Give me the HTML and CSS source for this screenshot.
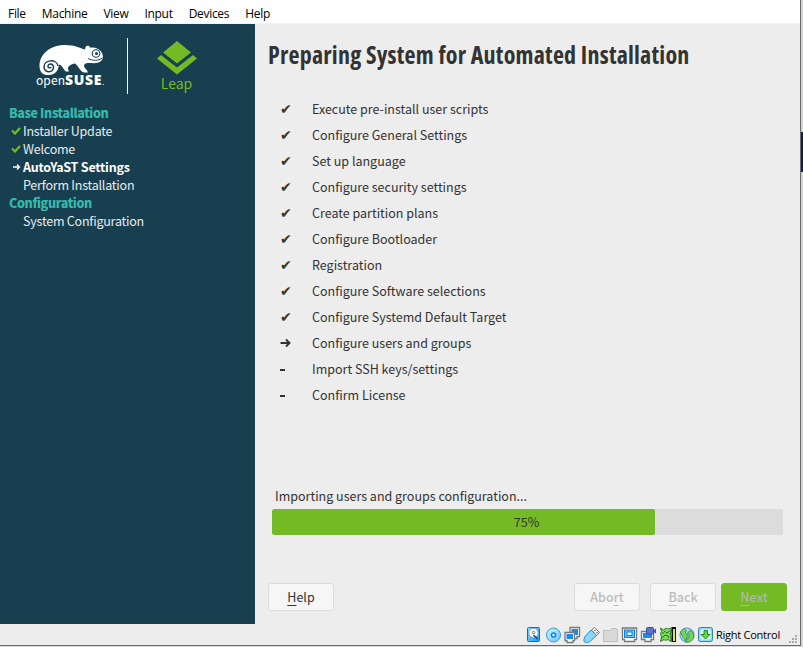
FILE: index.html
```html
<!DOCTYPE html>
<html lang="en">
<head>
<meta charset="utf-8">
<title>openSUSE Leap installer</title>
<link rel="stylesheet" href="styles.css">
</head>
<body>
<div class="screen">
<div class="window">
  <nav class="menu"><span>File</span><span>Machine</span><span>View</span><span>Input</span><span>Devices</span><span>Help</span></nav>
  <div class="guest">
    <aside class="side">
      <header class="brand">
        <div class="suse">
          <svg class="gecko" width="70" height="34" viewBox="0 0 70 34">
            <path fill="#fff" d="M3.500 22C3.500 11 13 1 29 1c10 0 15 3 20 4.500 0-3 2-4.500 4-3.500l1 1.500c6-.5 10 1.500 12 5.500 1.500 4 1 6-1 8-3 3-8 2-13 2-3 0-4 1.500-4 3.500 1 2 2.500 2.500 4 6h-4c-4-1-5-6-9-9-2 0-5 1-7 4 0 1 0 2 1 4h-3c-3-2-3-6-7-7-.5 6-4 10.500-10 10.500C7 31.500 3.500 28 3.500 22z"/>
            <path fill="none" stroke="#173f4f" stroke-width="1.500" d="M22 22c-1-7-14-7-14 1 0 6.500 10 6 9.500 0-.5-4-5.500-4-5.500-.5 0 1.500 2.500 2 3 .5"/>
            <circle cx="60" cy="9.500" r="3.800" fill="#fff" stroke="#173f4f" stroke-width="1.100"/>
            <circle cx="60.500" cy="9.500" r="1.500" fill="#173f4f"/>
            <path d="M52 14.500c5 2.500 10 2.500 14.500-.5" fill="none" stroke="#173f4f"/>
          </svg>
          <div class="wordmark"><span>open</span><b>SUSE</b><i>.</i></div>
        </div>
        <div class="rule"></div>
        <div class="leap">
          <svg width="40" height="34" viewBox="0 0 40 34"><path fill="#73ba25" d="M20 0 34 11.500 20 22.500 6 11.500zM0 17.500l4-3.500 16 12.500L36 14l4 3.500L20 33.500z"/></svg>
          <span>Leap</span>
        </div>
      </header>
      <ul class="steps">
        <li class="group">Base Installation</li>
        <li><svg width="10" height="8" viewBox="0 0 10 8"><path d="M1 3.500 4 6.500 9 1" fill="none" stroke="#73ba25" stroke-width="2.200"/></svg>Installer Update</li>
        <li><svg width="10" height="8" viewBox="0 0 10 8"><path d="M1 3.500 4 6.500 9 1" fill="none" stroke="#73ba25" stroke-width="2.200"/></svg>Welcome</li>
        <li class="current"><svg width="10" height="8" viewBox="0 0 10 8"><path d="M2 4H8.500M6 1.500 8.500 4 6 6.500" fill="none" stroke="#fff" stroke-width="1.300"/></svg>AutoYaST Settings</li>
        <li class="pending">Perform Installation</li>
        <li class="group">Configuration</li>
        <li class="pending">System Configuration</li>
      </ul>
    </aside>
    <main class="main">
      <h1><span>Preparing System for Automated Installation</span></h1>
      <ul class="tasks">
        <li><b>✔</b>Execute pre-install user scripts</li>
        <li><b>✔</b>Configure General Settings</li>
        <li><b>✔</b>Set up language</li>
        <li><b>✔</b>Configure security settings</li>
        <li><b>✔</b>Create partition plans</li>
        <li><b>✔</b>Configure Bootloader</li>
        <li><b>✔</b>Registration</li>
        <li><b>✔</b>Configure Software selections</li>
        <li><b>✔</b>Configure Systemd Default Target</li>
        <li><svg width="12" height="10" viewBox="0 0 12 10"><path d="M1.500 5H10M7 1.500 10.500 5 7 8.500" fill="none" stroke="#333" stroke-width="1.900"/></svg>Configure users and groups</li>
        <li><em></em>Import SSH keys/settings</li>
        <li><em></em>Confirm License</li>
      </ul>
      <p class="status">Importing users and groups configuration...</p>
      <div class="progress"><div class="fill" style="width:75%"></div><span>75%</span></div>
      <div class="buttons">
        <button class="help"><u>H</u>elp</button>
        <button class="off">Abo<u>r</u>t</button>
        <button class="off back"><u>B</u>ack</button>
        <button class="next"><u>N</u>ext</button>
      </div>
    </main>
  </div>
  <footer class="statusbar">
    <svg width="188" height="18" viewBox="0 0 188 18">
      <defs><linearGradient id="b" x1="0" y1="0" x2="1" y2="1"><stop stop-color="#8ee0ff"/><stop offset="1" stop-color="#149af2"/></linearGradient><linearGradient id="c" x1="0" y1="0" x2="1" y2="1"><stop stop-color="#d4f3ff"/><stop offset="1" stop-color="#5cc4fa"/></linearGradient></defs>
      <g stroke-width="1">
        <rect x="1.500" y="1.500" width="12" height="14" rx="1" fill="url(#b)" stroke="#0b6fc8"/><circle cx="7.500" cy="7" r="4.700" fill="#fff" stroke="#7ba3c0"/><circle cx="7.500" cy="6.500" r="1.300" fill="none" stroke="#579"/><path d="M7.500 9l4 4" fill="none" stroke="#247" stroke-width="1.500"/>
        <circle cx="27.500" cy="9" r="7" fill="url(#c)" stroke="#3b9add"/><circle cx="27.500" cy="9" r="2" fill="#fff" stroke="#0b7fd5" stroke-width="1.500"/>
        <path d="M44 1.500h9.500v9H51v2h-4v-2h-3z" fill="#fff" stroke="#777" stroke-width="1.300"/><path d="M45.500 3h6.500v6h-6.500z" fill="#188df0"/><path d="M39 6.500h9.500v8H47v2h-6v-2h-2z" fill="#fff" stroke="#777" stroke-width="1.300"/><path d="M40.500 8h6.500v5h-6.500z" fill="#188df0"/>
        <path d="M59.500 10 65 4l5.500 5.500-6 5.500c-2 2-6.500 2-6.500 0-.5-1 .5-4 1.500-5z" fill="#8ad6fb" stroke="#288bd1"/><path d="m65.500 4 3-2.500 5 5-3 3z" fill="#eee" stroke="#777"/><path d="M69 4v1m2 1v1" stroke="#333"/>
        <path d="M77.500 4.500h7l1-2h5l1 2v11h-14z" fill="#d9d9d9" stroke="#bdbdbd"/>
        <path d="M96.500 2h14v11.500h-2v2h-10v-2h-2z" fill="#fff" stroke="#777" stroke-width="1.300"/><rect x="98.500" y="4" width="10" height="7.500" fill="#6bc6ff" stroke="#087ad2"/><rect x="101" y="6" width="5" height="3.500" fill="#fff" stroke="#087ad2"/>
        <path d="M115.500 5.500h12v8H125v2h-6v-2h-3.500z" fill="#fff" stroke="#777" stroke-width="1.300"/><path d="M117 7h9v5h-9z" fill="#188df0"/><rect x="120.500" y="1.500" width="7" height="6.500" rx="1" fill="#5f74c5" stroke="#3b4da6"/><path d="m127.500 4.500 2.500-2v5l-2.500-1.500z" fill="#4054ad"/>
        <path d="M134.500 2l3 2c2-2 4-2 5-1l2.500-1v4l-1 3 1 2v4.500l-3-2c-2 1-3 1-4 0l-3.500 2 1-4.500-1-3.500 1-2z" fill="#7bdc59" stroke="#34732a"/><path d="m138 5 3 2 3-2m-8 7 3-3 3 1 1 2m-7-5h2" fill="none" stroke="#276b21"/><rect x="145.500" y="1" width="4.500" height="15" fill="#111"/><path d="M148 3v12" stroke="#d5ee32" stroke-width="2"/>
        <circle cx="161" cy="9" r="7" fill="url(#c)" stroke="#468abd"/><path d="M154.500 6l3-3.500 3 2-1 3 2 2-1.500 5-3-3zM161 8l3-4 3 3c2 4 0 8-4 9h-4l1-3 3-1v-4z" fill="#76d553" stroke="#3a8740" stroke-width=".8"/>
        <rect x="172.500" y="1.500" width="14" height="14" rx="2" fill="#8edbf5" stroke="#397fa8"/><rect x="174.500" y="3.500" width="10" height="10" rx="2" fill="#e5ffe0"/><path d="M178 4.500h3.500v4h2.500l-4.500 4.500L175 8.500h3z" fill="#60d84d" stroke="#23822a"/>
      </g>
    </svg>
    <span class="hostkey">Right Control</span>
    <svg class="grip" width="8" height="8" viewBox="0 0 8 8"><path fill="#aaa" d="M6 0h2v2H6zM3 3h2v2H3zM6 3h2v2H6zM0 6h2v2H0zM3 6h2v2H3zM6 6h2v2H6z"/></svg>
  </footer>
</div>
<div class="behind"><i></i></div>
</div>
</body>
</html>
```
FILE: styles.css
```css
* { box-sizing: border-box; }
body { margin: 0; overflow: hidden; background: #d9d9d9; color: #333; font: 12.5px/18px "Noto Sans CJK SC", "Noto Sans", sans-serif; }
ul, h1, p { margin: 0; padding: 0; list-style: none; }
.screen { display: flex; width: 803px; height: 647px; }
.window { width: 801px; height: 646px; border-right: 1px solid #6b6b6b; border-bottom: 1px solid #6b6b6b; background: #ededed; display: flex; flex-direction: column; }
.behind { flex: 1; padding-top: 132px; background: #d5d5d5; }
.behind i { display: block; height: 40px; background: #1b1b54; }
.menu { height: 24px; padding: 2px 8px 0; background: #fff; border-bottom: 1px solid #f4f4f4; display: flex; gap: 16px; color: #000; font: 12px/24px "Open Sans", sans-serif; letter-spacing: -.3px; }
.guest { display: flex; height: 600px; }
.side { width: 255px; background: #173f4f; color: #e6ecee; }
.brand { height: 80px; display: flex; padding: 14px 0 0 36px; }
.suse { width: 91px; padding-top: 6px; }
.gecko { display: block; }
.wordmark { display: flex; align-items: baseline; color: #fff; line-height: 14px; margin-top: -5px; font-size: 12px; }
.wordmark span { letter-spacing: .1px; }
.wordmark b { font: 800 14px/14px "Open Sans", sans-serif; letter-spacing: .6px; }
.wordmark i { font-size: 8px; }
.rule { width: 1px; height: 56px; background: #fff; }
.leap { margin-left: 29px; padding-top: 3px; width: 40px; display: flex; flex-direction: column; align-items: center; color: #73ba25; font-size: 14px; }
.leap svg { flex: none; }
.leap span { margin-top: -1px; margin-left: -1px; }
.steps { padding: 0 9px; letter-spacing: -.22px; }
.steps li { height: 18px; display: flex; align-items: center; padding-left: 2px; white-space: nowrap; }
.steps li svg { margin-right: 2px; flex: none; }
.steps .pending { padding-left: 14px; }
.steps .group { padding-left: 0; color: #35b9ab; font-weight: 900; letter-spacing: -.38px; }
.steps .current { color: #fff; font-weight: 700; }
.main { flex: 1; padding: 14px 13px 0; }
h1 { height: 34px; font: 700 24px/34px "Open Sans", sans-serif; font-stretch: 75%; letter-spacing: .22px; white-space: nowrap; }
.tasks { padding: 24px 0 0 11px; }
.tasks li { height: 26px; display: grid; grid-template-columns: 33px auto; align-items: center; }
.tasks b { font: 14px/18px "DejaVu Sans", sans-serif; padding-left: 1px; }
.tasks em { width: 5px; height: 2px; margin-left: 1px; margin-top: 2px; background: #333; }
.status { padding: 79px 0 0 7px; }
.progress { position: relative; margin: 4px 4px 0; height: 26px; background: #dcdcdc; border-radius: 2px; overflow: hidden; }
.fill { height: 26px; background: #73ba25; border-radius: 2px; }
.progress span { position: absolute; inset: 0 2px 0 0; text-align: center; line-height: 26px; }
.buttons { display: flex; margin-top: 48px; }
button { width: 66px; height: 28px; padding: 0; border: 1px solid #dcdcdc; border-radius: 3px; background: #f6f6f6; color: #333; font: inherit; }
u { text-underline-offset: 3px; text-decoration-thickness: 1px; }
.help { margin-right: 240px; }
.off { color: #bcbcbc; font-weight: 500; }
.back { margin-left: 10px; }
.next { margin-left: 5px; border-color: #73ba25; background: #73ba25; color: #b4b4b4; font-weight: 500; }
.statusbar { height: 21px; display: flex; align-items: center; padding-left: 526px; color: #000; }
.statusbar svg { flex: none; }
.hostkey { margin-left: 2px; width: 70px; white-space: nowrap; font: 11px/20px "Open Sans", sans-serif; letter-spacing: -.25px; }
.grip { margin-left: 3px; margin-top: 8px; }
```
